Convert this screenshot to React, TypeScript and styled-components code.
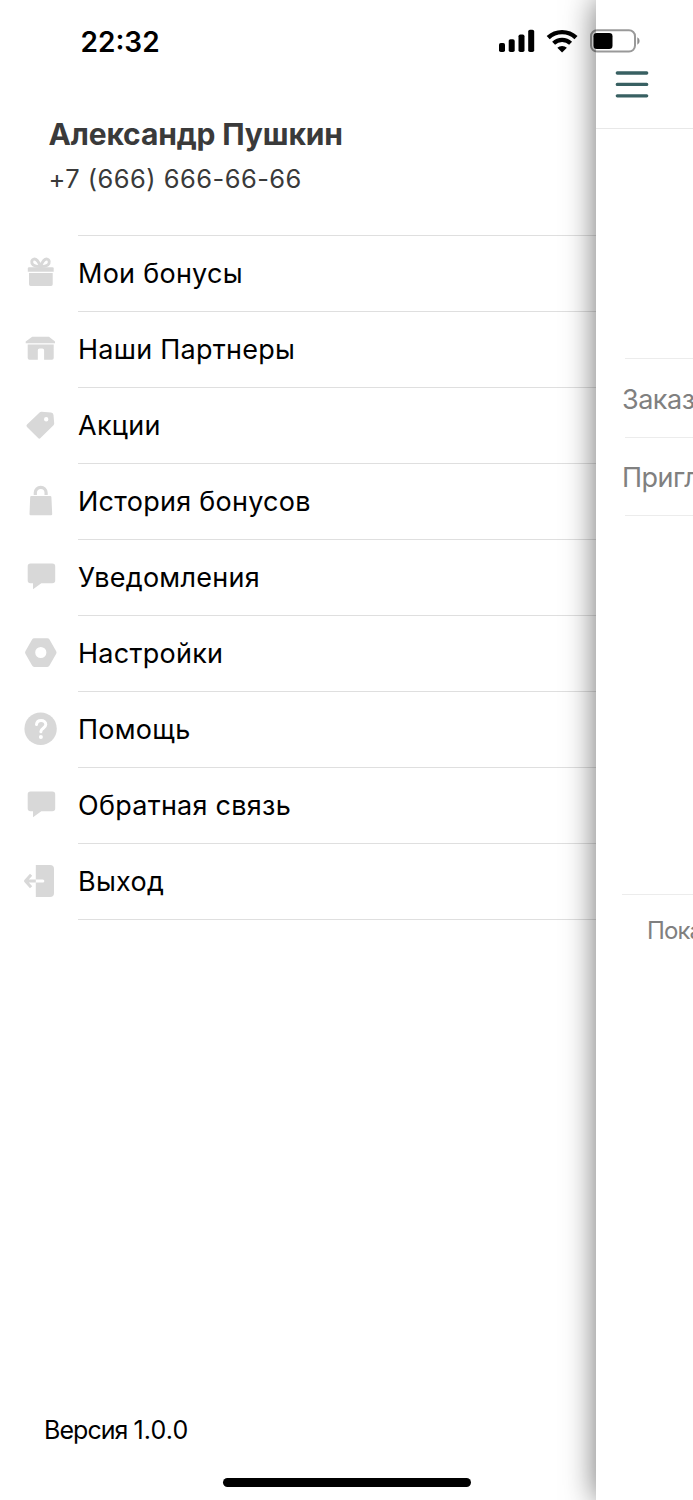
import React from "react";
import styled, { createGlobalStyle } from "styled-components";

const GlobalStyle = createGlobalStyle`
  * { box-sizing: border-box; }
  body {
    margin: 0;
    background: #fff;
    font-family: Inter, "Liberation Sans", sans-serif;
    color: #000;
  }
`;

const Screen = styled.div`
  position: relative;
  display: flex;
  width: 693px;
  height: 1500px;
  overflow: hidden;
  background: #fff;
`;

const StatusBar = styled.header`
  position: absolute;
  z-index: 2;
  top: 0;
  left: 0;
  display: flex;
  align-items: center;
  justify-content: space-between;
  width: 642px;
  height: 82px;
  padding-left: 80.5px;
`;

const Clock = styled.time`
  padding-top: 2px;
  font-size: 28px;
  font-weight: 600;
  line-height: 34px;
  letter-spacing: 0;
`;

const StatusIcons = styled.svg`
  display: block;
  width: 144px;
  height: 28px;
`;

const Drawer = styled.aside`
  display: flex;
  flex-direction: column;
  flex: 0 0 596px;
  height: 100%;
  padding-top: 115px;
`;

const Profile = styled.section`
  height: 120px;
  padding-left: 48.5px;
`;

const UserName = styled.h1`
  margin: 0;
  font-size: 30px;
  font-weight: 700;
  line-height: 38px;
  letter-spacing: -0.15px;
  color: #3a3a3a;
`;

const Phone = styled.p`
  margin: 8px 0 0;
  font-size: 25.5px;
  line-height: 36px;
  letter-spacing: 0.45px;
  color: #3a3a3a;
`;

const Menu = styled.nav`
  flex: 1;
`;

const MenuRow = styled.a`
  display: flex;
  height: 76px;
`;

const IconCell = styled.span`
  display: flex;
  flex: 0 0 78px;
  padding: 18px 0 0 21px;
`;

const Label = styled.span<{ $last?: boolean }>`
  flex: 1;
  height: ${(p) => (p.$last ? 77 : 76)}px;
  border-top: 1px solid #dfdfdf;
  border-bottom: ${(p) => (p.$last ? "1px solid #dfdfdf" : "0")};
  font-size: 27px;
  line-height: 75px;
  letter-spacing: 0.26px;
`;

const Version = styled.footer`
  height: 85px;
  padding-left: 44px;
  font-size: 25px;
  line-height: 30px;
  letter-spacing: -0.95px;
`;

const VersionNumber = styled.span`
  letter-spacing: 0.1px;
`;

const HomeIndicator = styled.div`
  position: absolute;
  z-index: 2;
  left: 223px;
  bottom: 13px;
  width: 248px;
  height: 9px;
  border-radius: 5px;
  background: #000;
`;

const Page = styled.main`
  flex: 1;
  min-width: 0;
  height: 100%;
  overflow: hidden;
  background: #fff;
  box-shadow: 0 0 32px rgba(0, 0, 0, 0.57);
  color: #808080;
`;

const PageHeader = styled.div`
  height: 129px;
  padding: 70px 0 0 19px;
  border-bottom: 1px solid #e8e8e8;
`;

const Actions = styled.div`
  margin-top: 229px;
  padding-left: 29px;
  height: 536px;
`;

const Action = styled.div<{ $last?: boolean }>`
  height: 79px;
  white-space: nowrap;
  border-top: 1px solid #ececec;
  border-bottom: ${(p) => (p.$last ? "1px solid #ececec" : "0")};
  font-size: 27px;
  line-height: ${(p) => (p.$last ? 80 : 82)}px;
  letter-spacing: -0.5px;
  text-indent: -3px;
`;

const More = styled.div`
  margin-left: 26px;
  padding-left: 25px;
  border-top: 1px solid #ececec;
  font-size: 24px;
  line-height: 72px;
  letter-spacing: -0.9px;
  white-space: nowrap;
`;

const shapes: Record<string, React.ReactNode> = {
  gift: (
    <>
      <path
        d="M19.500 13.500C17 7 14.800 5.800 12.900 6.100c-2.500.4-2.900 4-.8 5.800 1.400 1.200 3.700 1.600 7.400 1.600Zm0 0C22 7 24.200 5.800 26.100 6.100c2.500.4 2.900 4 .8 5.800-1.400 1.200-3.700 1.600-7.400 1.600Z"
        fill="none"
        stroke="#d8d8d8"
        strokeWidth="2.900"
      />
      <path d="M8 14.300h23.500a1.200 1.200 0 0 1 1.200 1.200V18.700H6.800v-3.200A1.200 1.200 0 0 1 8 14.300Z" />
      <path d="M8 20h23.700v11.300a1.600 1.600 0 0 1-1.600 1.600H9.600A1.600 1.600 0 0 1 8 31.300Z" />
    </>
  ),
  store: (
    <g transform="translate(-.300 .700)">
      <path d="M11.500 7h16.800l6 4.800v1.700H5v-1.700Z" />
      <path d="M7 14.800h26v13.500a1.700 1.700 0 0 1-1.700 1.700H23.400v-9.500a1.800 1.800 0 0 0-1.800-1.800h-2.700a1.800 1.800 0 0 0-1.800 1.800V30H8.700A1.700 1.700 0 0 1 7 28.300Z" />
    </g>
  ),
  tag: (
    <path
      transform="translate(0 -.500)"
      fillRule="evenodd"
      d="M20.500 7.300 30 8a2.700 2.700 0 0 1 2.500 2.500l.7 8.300a2.500 2.500 0 0 1-.7 2L19.500 33.600a1.700 1.700 0 0 1-2.400 0L6 22.500a1.700 1.700 0 0 1 0-2.400L18.600 8a2.700 2.700 0 0 1 1.900-.7ZM25.200 12.500a2.200 2.200 0 1 0 0 4.400 2.200 2.200 0 0 0 0-4.400Z"
    />
  ),
  bag: (
    <>
      <path d="M14.300 14v-2.300a5.400 5.400 0 0 1 10.800 0V14" fill="none" stroke="#d8d8d8" strokeWidth="3.200" />
      <path d="M10.400 15h18.800a1.200 1.200 0 0 1 1.200 1.100L31.200 33a1.200 1.200 0 0 1-1.200 1.300H9.700A1.200 1.200 0 0 1 8.500 33l.7-16.900a1.200 1.200 0 0 1 1.200-1.100Z" />
    </>
  ),
  chat: (
    <path d="M9.500 6.500h21.900a2.800 2.800 0 0 1 2.800 2.800v14.200a2.800 2.800 0 0 1-2.800 2.800H20.300L12 32.200v-5.900H9.500a2.800 2.800 0 0 1-2.800-2.800V9.300a2.800 2.800 0 0 1 2.800-2.800Z" />
  ),
  settings: (
    <path
      transform="translate(0 .900)"
      fillRule="evenodd"
      d="M13.300 4.300h13a2.500 2.500 0 0 1 2.200 1.300l6.700 11.800a2.600 2.600 0 0 1 0 2.500l-6.700 11.800a2.500 2.500 0 0 1-2.200 1.300h-13a2.500 2.500 0 0 1-2.200-1.300L4.400 19.900a2.600 2.600 0 0 1 0-2.500l6.700-11.800a2.500 2.500 0 0 1 2.200-1.300ZM19.800 13a5.600 5.600 0 1 0 0 11.200 5.600 5.600 0 0 0 0-11.200Z"
    />
  ),
  help: (
    <g transform="translate(-.200 1.300)">
      <circle cx="19.800" cy="18.500" r="16.200" />
      <path
        d="M15.700 14.200c.3-2.700 2.100-4 4.600-4 2.700 0 4.700 1.600 4.700 4.100 0 3.400-4.700 3.700-4.900 6.700v.5"
        fill="none"
        stroke="#fff"
        strokeWidth="3"
        strokeLinecap="round"
      />
      <circle cx="20.100" cy="26.600" r="2" fill="#fff" />
    </g>
  ),
  exit: (
    <g transform="translate(-.700 1.700)">
      <path d="M15.500 2.300h14.200a4 4 0 0 1 4 4v23.900a4 4 0 0 1-4 4H15.500Z" />
      <path d="M15 18.300h7.500" stroke="#fff" strokeWidth="3" strokeLinecap="round" fill="none" />
      <path
        d="M15.500 18.300H5.500M10.800 12 5.200 18.300l5.600 6.300"
        fill="none"
        stroke="#d8d8d8"
        strokeWidth="3"
        strokeLinecap="butt"
        strokeLinejoin="round"
      />
    </g>
  ),
};

const items = [
  { icon: "gift", label: "Мои бонусы" },
  { icon: "store", label: "Наши Партнеры" },
  { icon: "tag", label: "Акции" },
  { icon: "bag", label: "История бонусов" },
  { icon: "chat", label: "Уведомления" },
  { icon: "settings", label: "Настройки" },
  { icon: "help", label: "Помощь" },
  { icon: "chat", label: "Обратная связь" },
  { icon: "exit", label: "Выход" },
];

export default function App() {
  return (
    <Screen>
      <GlobalStyle />
      <StatusBar>
        <Clock>22:32</Clock>
        <StatusIcons viewBox="498 27 144 28">
          <rect x="499" y="43" width="6" height="9" rx="1.800" />
          <rect x="508.700" y="39.300" width="6" height="12.700" rx="1.800" />
          <rect x="518.500" y="34.500" width="6" height="17.500" rx="1.800" />
          <rect x="528.200" y="29.700" width="6" height="22.300" rx="1.800" />
          <g fill="none" stroke="#000">
            <path d="M548.200 37.700a20 20 0 0 1 27.800 0" strokeWidth="4.400" />
            <path d="M553.600 43.300a12.300 12.300 0 0 1 17 0" strokeWidth="4.200" />
          </g>
          <path d="M557.300 47.800a7 7 0 0 1 9.600 0L562.100 52.500Z" />
          <rect x="591" y="30.200" width="44" height="21.400" rx="6" fill="none" stroke="#000" strokeOpacity=".4" strokeWidth="2" />
          <rect x="593.500" y="33" width="19" height="16" rx="3.300" />
          <path d="M637.300 37.300a4.100 4.100 0 0 1 0 7.400Z" fillOpacity=".45" />
        </StatusIcons>
      </StatusBar>

      <Drawer>
        <Profile>
          <UserName>Александр Пушкин</UserName>
          <Phone>+7 (666) 666-66-66</Phone>
        </Profile>
        <Menu>
          {items.map(({ icon, label }, i) => (
            <MenuRow key={label}>
              <IconCell>
                <svg width="40" height="40" viewBox="0 0 40 40" fill="#d8d8d8">
                  {shapes[icon]}
                </svg>
              </IconCell>
              <Label $last={i === items.length - 1}>{label}</Label>
            </MenuRow>
          ))}
        </Menu>
        <Version>
          Версия <VersionNumber>1.0.0</VersionNumber>
        </Version>
      </Drawer>

      <Page>
        <PageHeader>
          <svg width="34" height="30" viewBox="0 0 34 30" stroke="#386062" strokeWidth="3.300" strokeLinecap="round">
            <path d="M2.300 3h29.400M2.300 14.400h29.400M2.300 25.800h29.400" />
          </svg>
        </PageHeader>
        <Actions>
          <Action>Заказ</Action>
          <Action $last>Пригл</Action>
        </Actions>
        <More>Пока</More>
      </Page>

      <HomeIndicator />
    </Screen>
  );
}
